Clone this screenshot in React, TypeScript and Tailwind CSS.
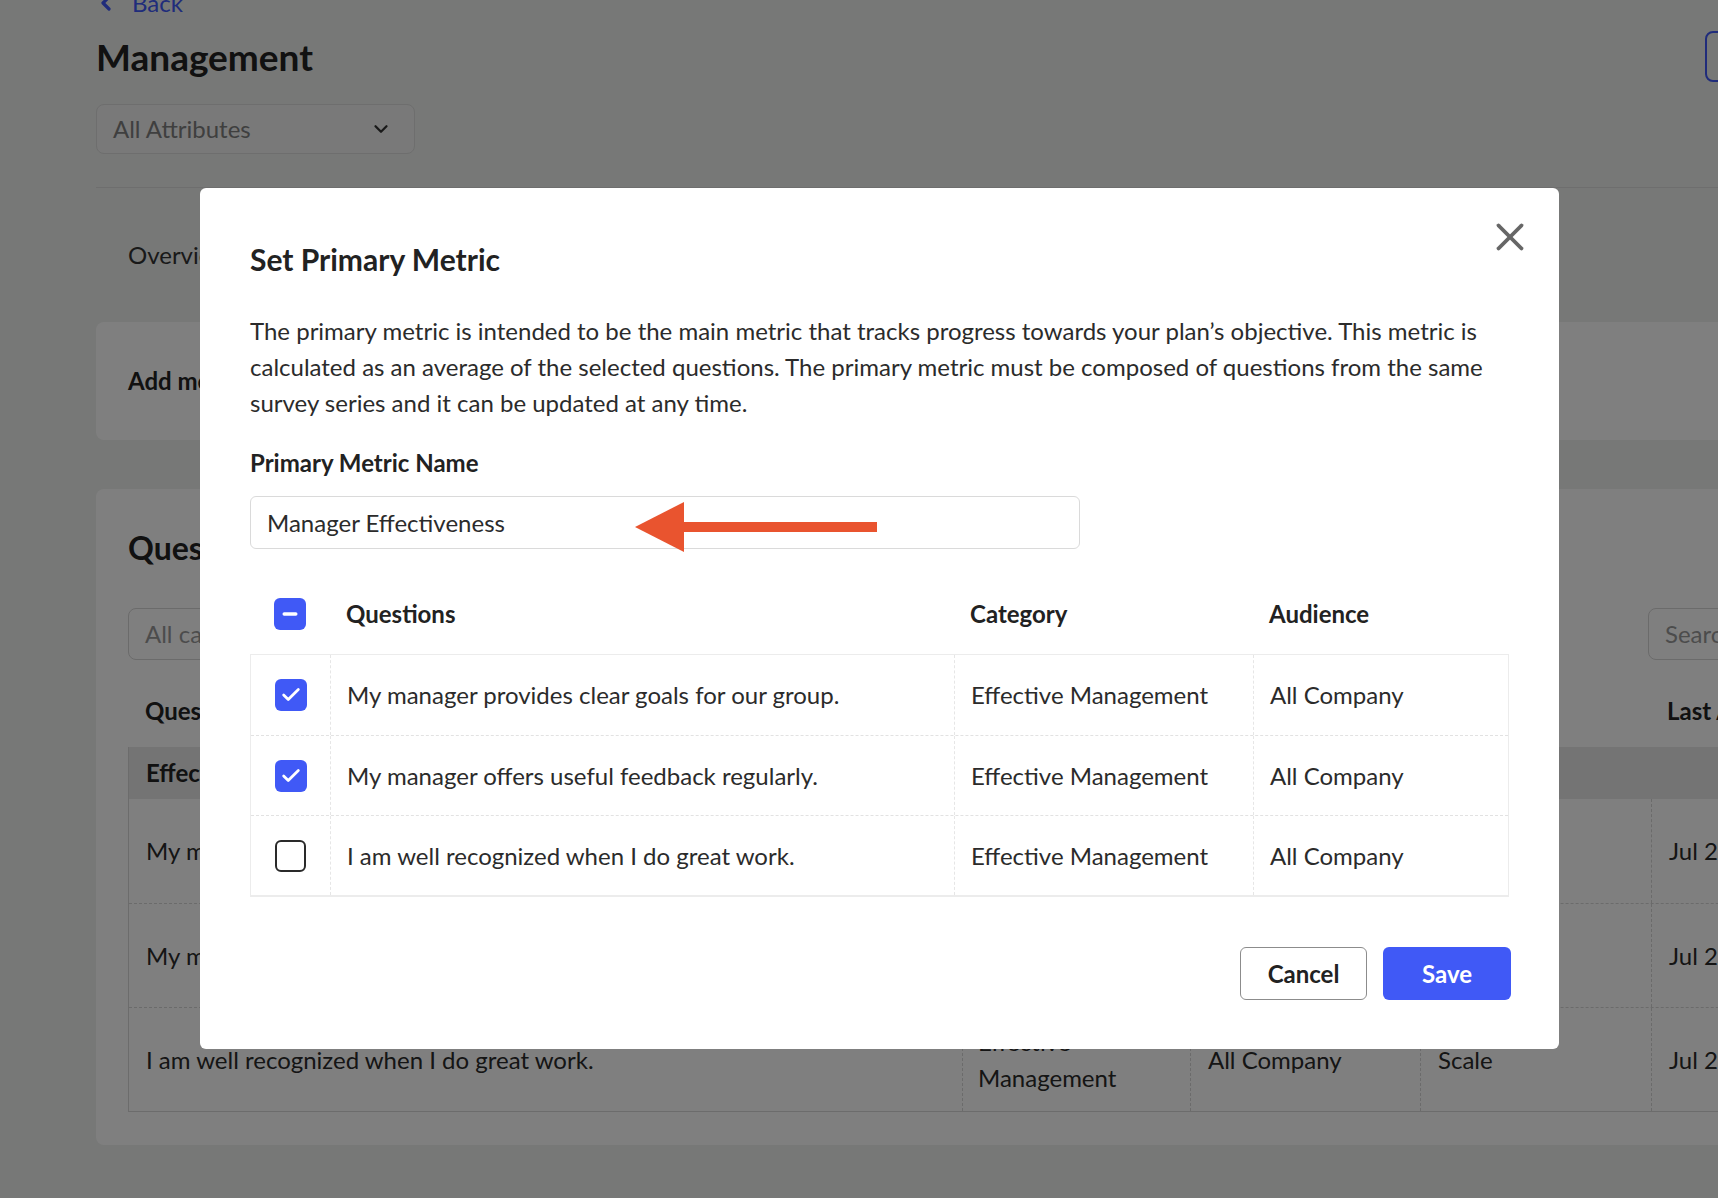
import { Check, ChevronDown, ChevronLeft, Minus, X } from "lucide-react";

const questions = [
  { text: "My manager provides clear goals for our group.", checked: true },
  { text: "My manager offers useful feedback regularly.", checked: true },
  { text: "I am well recognized when I do great work.", checked: false },
];

function Checkbox({ state }: { state: "checked" | "unchecked" | "mixed" }) {
  if (state === "unchecked") {
    return (
      <div className="w-[31px] h-[32px] rounded-[6px] border-[2.5px] border-[#2a2a2a] bg-white" />
    );
  }
  return (
    <div className="w-[32px] h-[32px] rounded-[6px] bg-[#4059f6] flex items-center justify-center">
      {state === "checked" ? (
        <Check className="w-[22px] h-[22px] text-white" strokeWidth={3} />
      ) : (
        <Minus className="w-[20px] h-[20px] text-white" strokeWidth={4} />
      )}
    </div>
  );
}

function BackgroundPage() {
  return (
    <div className="w-[1996px] pl-[96px] text-[#222]">
      {/* Back link */}
      <div className="mt-[-11px] h-[28px] flex items-center text-[24px] leading-[28px] text-[#4059f6]">
        <ChevronLeft className="w-[24px] h-[24px] ml-[-2px]" strokeWidth={3.2} />
        <span className="ml-[14px]">Back</span>
      </div>

      {/* Title row */}
      <div className="mt-[14px] w-[1769px] h-[51px] flex items-center justify-between">
        <h1 className="text-[37px] leading-[48px] font-bold">Management</h1>
        <button className="w-[160px] h-[51px] rounded-[8px] border-2 border-[#4059f6] text-[22px] font-bold text-[#4059f6]">
          Edit Plan
        </button>
      </div>

      {/* Attribute filter */}
      <div className="mt-[22px] w-[319px] h-[50px] rounded-[8px] border border-[#dcdcdc] bg-[#f2f3f2] flex items-center justify-between pl-[16px] pr-[22px]">
        <span className="text-[24px] text-[#7e7e7e]">All Attributes</span>
        <ChevronDown className="w-[22px] h-[22px] text-[#333]" strokeWidth={2.5} />
      </div>

      <div className="mt-[33px] w-[1900px] h-px bg-[#dcdcdc]" />

      {/* Tabs */}
      <div className="h-[134px] flex items-center gap-[48px] px-[32px] text-[24px] text-[#333]">
        <span>Overview</span>
        <span>Action Items</span>
        <span>Progress</span>
      </div>

      {/* Metric card */}
      <div className="w-[1900px] h-[118px] rounded-[8px] bg-white flex items-center px-[32px]">
        <span className="text-[24px] font-bold">Add metrics to track your progress</span>
      </div>

      {/* Questions card */}
      <div className="mt-[49px] w-[1900px] rounded-[8px] bg-white px-[32px] pt-[39px] pb-[33px]">
        <h2 className="text-[32px] leading-[40px] font-bold">Questions</h2>
        <div className="mt-[40px] flex justify-between">
          <div className="w-[300px] h-[52px] rounded-[8px] border border-[#d6d6d6] flex items-center px-[16px] text-[24px] text-[#999]">
            All categories
          </div>
          <div className="w-[316px] h-[52px] rounded-[8px] border border-[#d6d6d6] flex items-center px-[16px] text-[24px] text-[#999]">
            Search
          </div>
        </div>

        <div className="mt-[15px] h-[72px] grid grid-cols-[833px_228px_230px_231px_1fr] items-center text-[24px] font-bold">
          <span className="pl-[17px]">Questions</span>
          <span className="pl-[17px]">Category</span>
          <span className="pl-[17px]">Audience</span>
          <span className="pl-[17px]">Type</span>
          <span className="pl-[17px]">Last Asked</span>
        </div>

        <div className="border-l border-b border-[#d8d8d8]">
          <div className="h-[52px] bg-[#e9e9e9] flex items-center pl-[17px] text-[24px] font-bold">
            Effective Management
          </div>
          {questions.map((q, i) => (
            <div
              key={i}
              className={`h-[104px] grid grid-cols-[833px_228px_230px_231px_1fr] text-[24px] leading-[36px] text-[#2a2a2a] ${
                i > 0 ? "border-t border-dashed border-[#d6d6d6]" : ""
              }`}
            >
              <div className="flex items-center pl-[17px]">{q.text}</div>
              <div className="flex items-center pl-[15px] border-l border-dashed border-[#d6d6d6]">
                Effective Management
              </div>
              <div className="flex items-center pl-[17px] border-l border-dashed border-[#d6d6d6]">
                All Company
              </div>
              <div className="flex items-center pl-[17px] border-l border-dashed border-[#d6d6d6]">
                Scale
              </div>
              <div className="flex items-center pl-[17px] border-l border-dashed border-[#d6d6d6]">
                Jul 2023
              </div>
            </div>
          ))}
        </div>
      </div>
    </div>
  );
}

function MetricModal() {
  return (
    <div className="absolute left-[200px] top-[188px] w-[1359px] rounded-[6px] bg-white px-[50px] pt-[51px] pb-[49px] text-[#222]">
      <button className="absolute right-[26px] top-[26px] text-[#666]">
        <X className="w-[46px] h-[46px]" strokeWidth={2} />
      </button>

      <h2 className="text-[30px] leading-[40px] font-bold">Set Primary Metric</h2>

      <p className="mt-[34px] text-[24px] leading-[36px] text-[#2b2b2b]">
        The primary metric is intended to be the main metric that tracks progress towards your
        plan’s objective. This metric is calculated as an average of the selected questions. The
        primary metric must be composed of questions from the same survey series and it can be
        updated at any time.
      </p>

      <label className="block mt-[24px] text-[24px] leading-[36px] font-bold">
        Primary Metric Name
      </label>

      <div className="relative mt-[15px] w-[830px] h-[53px] rounded-[6px] border border-[#dadada] flex items-center px-[16px] text-[24px] text-[#2b2b2b]">
        Manager Effectiveness
        {/* annotation arrow */}
        <svg
          className="absolute left-[384px] top-[5px]"
          width="242"
          height="50"
          viewBox="0 0 242 50"
        >
          <polygon points="0,25 49,0 49,50" fill="#e9542f" />
          <rect x="48" y="20" width="194" height="10" fill="#e9542f" />
        </svg>
      </div>

      {/* Question table */}
      <div className="mt-[24px] h-[81px] grid grid-cols-[79px_624px_299px_1fr] items-center text-[24px] font-bold">
        <div className="flex justify-center">
          <Checkbox state="mixed" />
        </div>
        <span className="pl-[17px]">Questions</span>
        <span className="pl-[17px]">Category</span>
        <span className="pl-[17px]">Audience</span>
      </div>

      <div className="border border-b-2 border-[#ececec]">
        {questions.map((q, i) => (
          <div
            key={i}
            className={`h-[80px] grid grid-cols-[79px_624px_299px_1fr] text-[24px] text-[#2b2b2b] ${
              i > 0 ? "border-t border-dashed border-[#e2e2e2]" : ""
            }`}
          >
            <div className="flex items-center justify-center">
              <Checkbox state={q.checked ? "checked" : "unchecked"} />
            </div>
            <div className="flex items-center pl-[16px] border-l border-dashed border-[#e6e6e6]">
              {q.text}
            </div>
            <div className="flex items-center pl-[16px] border-l border-dashed border-[#e6e6e6]">
              Effective Management
            </div>
            <div className="flex items-center pl-[16px] border-l border-dashed border-[#e6e6e6]">
              All Company
            </div>
          </div>
        ))}
      </div>

      <div className="mt-[50px] mr-[-2px] flex justify-end gap-[16px]">
        <button className="w-[127px] h-[53px] rounded-[6px] border border-[#8c8c8c] bg-white text-[24px] font-bold text-[#222]">
          Cancel
        </button>
        <button className="w-[128px] h-[53px] rounded-[6px] bg-[#4059f6] text-[24px] font-bold text-white">
          Save
        </button>
      </div>
    </div>
  );
}

export default function App() {
  return (
    <div className="relative w-full h-[1198px] overflow-hidden bg-[#eef0ee] font-['Lato',sans-serif]">
      <BackgroundPage />
      <div className="absolute inset-0 bg-black/50" />
      <MetricModal />
    </div>
  );
}
